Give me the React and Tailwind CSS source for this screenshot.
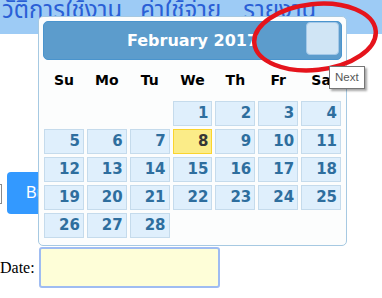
import React from "react";

// ── Calendar data ─────────────────────────────────────────────
const DAY_NAMES = ["Su", "Mo", "Tu", "We", "Th", "Fr", "Sa"];
// February 2017 starts on Wednesday
const CELLS = [null, null, null, ...Array.from({ length: 28 }, (_, i) => i + 1)];
const TODAY = 8;

const sans = "font-['DejaVu_Sans',Verdana,sans-serif]";

function DayCell({ day }) {
  if (!day) return <div className="h-[25px]" />;
  const today = day === TODAY;
  return (
    <div
      className={`h-[25px] flex items-center justify-end pr-[3px] border text-[15px] font-bold ${sans} ${
        today
          ? "bg-[#fbec88] border-[#fad42e] text-[#363636]"
          : "bg-[#dfeffc] border-[#c5dbec] text-[#2e6e9e]"
      }`}
    >
      {day}
    </div>
  );
}

function DatePicker() {
  return (
    <div className="absolute left-[38px] top-[16px] w-[309px] h-[230px] border border-[#a6c9e2] rounded-[5px] bg-[#fcfdfd] p-[4px]">
      {/* header */}
      <div className="relative h-[39px] bg-[#5c9ccc] border border-[#4a94cd] rounded-[5px] flex items-center justify-center">
        <span className={`text-white text-[16px] font-bold ${sans}`}>February 2017</span>
        <div className="absolute right-[2px] top-0 w-[33px] h-[33px] bg-[#d0e5f5] border border-[#a3c8e8] rounded-[4px]" />
      </div>

      {/* day names */}
      <div className="grid grid-cols-7 gap-x-[3px] px-[1px] h-[41px] items-center">
        {DAY_NAMES.map((d) => (
          <div key={d} className={`text-center text-[14px] font-bold text-black ${sans}`}>
            {d}
          </div>
        ))}
      </div>

      {/* days */}
      <div className="grid grid-cols-7 gap-[3px] px-[1px]">
        {CELLS.map((d, i) => (
          <DayCell key={i} day={d} />
        ))}
      </div>
    </div>
  );
}

export default function App() {
  return (
    <div className="relative w-[382px] h-[298px] overflow-hidden bg-white">
      {/* top menu band */}
      <div className="h-[34px] bg-[#9dcbf5] flex items-start pl-[2px] text-[24px] leading-[22px] text-[#2a5fd6] font-['Tahoma','Noto_Sans_Thai','Noto_Sans',sans-serif] whitespace-nowrap">
        <span>วัติการใช้งาน</span>
        <span className="ml-[18px]">ค่าใช้จ่าย</span>
        <span className="ml-[22px]">รายงาน</span>
      </div>

      {/* button row */}
      <div className="mt-[138px] flex items-center h-[42px]">
        <div className="w-[3px] h-[20px] border border-l-0 border-[#8a8a8a] ml-[-1px] mt-[2px]" />
        <button className="ml-[5px] h-[42px] w-[80px] bg-[#3399ff] rounded-[4px] text-white text-[16px] text-left pl-[19px] font-['Liberation_Sans',Arial,sans-serif]">
          Button
        </button>
      </div>

      {/* date row */}
      <div className="mt-[33px] flex items-center">
        <span className="text-[16px] text-black font-['Liberation_Serif','Times_New_Roman',serif]">Date:</span>
        <div className="ml-[4px] w-[181px] h-[41px] bg-[#fefed8] border-2 border-[#9fbcf2] rounded-[3px]" />
      </div>

      <DatePicker />

      {/* red annotation ellipse */}
      <svg className="absolute left-0 top-0" width="382" height="298" viewBox="0 0 382 298">
        <ellipse
          cx="315"
          cy="37"
          rx="61"
          ry="33"
          transform="rotate(-6 315 37)"
          fill="none"
          stroke="#e5141c"
          strokeWidth="4.5"
        />
      </svg>

      {/* tooltip */}
      <div className="absolute left-[329px] top-[66px] w-[36px] h-[23px] bg-white border border-[#767676] shadow-[2px_2px_2px_rgba(0,0,0,0.35)] pl-[5px] pt-[3px] text-[11.5px] leading-[14px] text-[#575757] font-['Liberation_Sans',Arial,sans-serif]">
        Next
      </div>
    </div>
  );
}
